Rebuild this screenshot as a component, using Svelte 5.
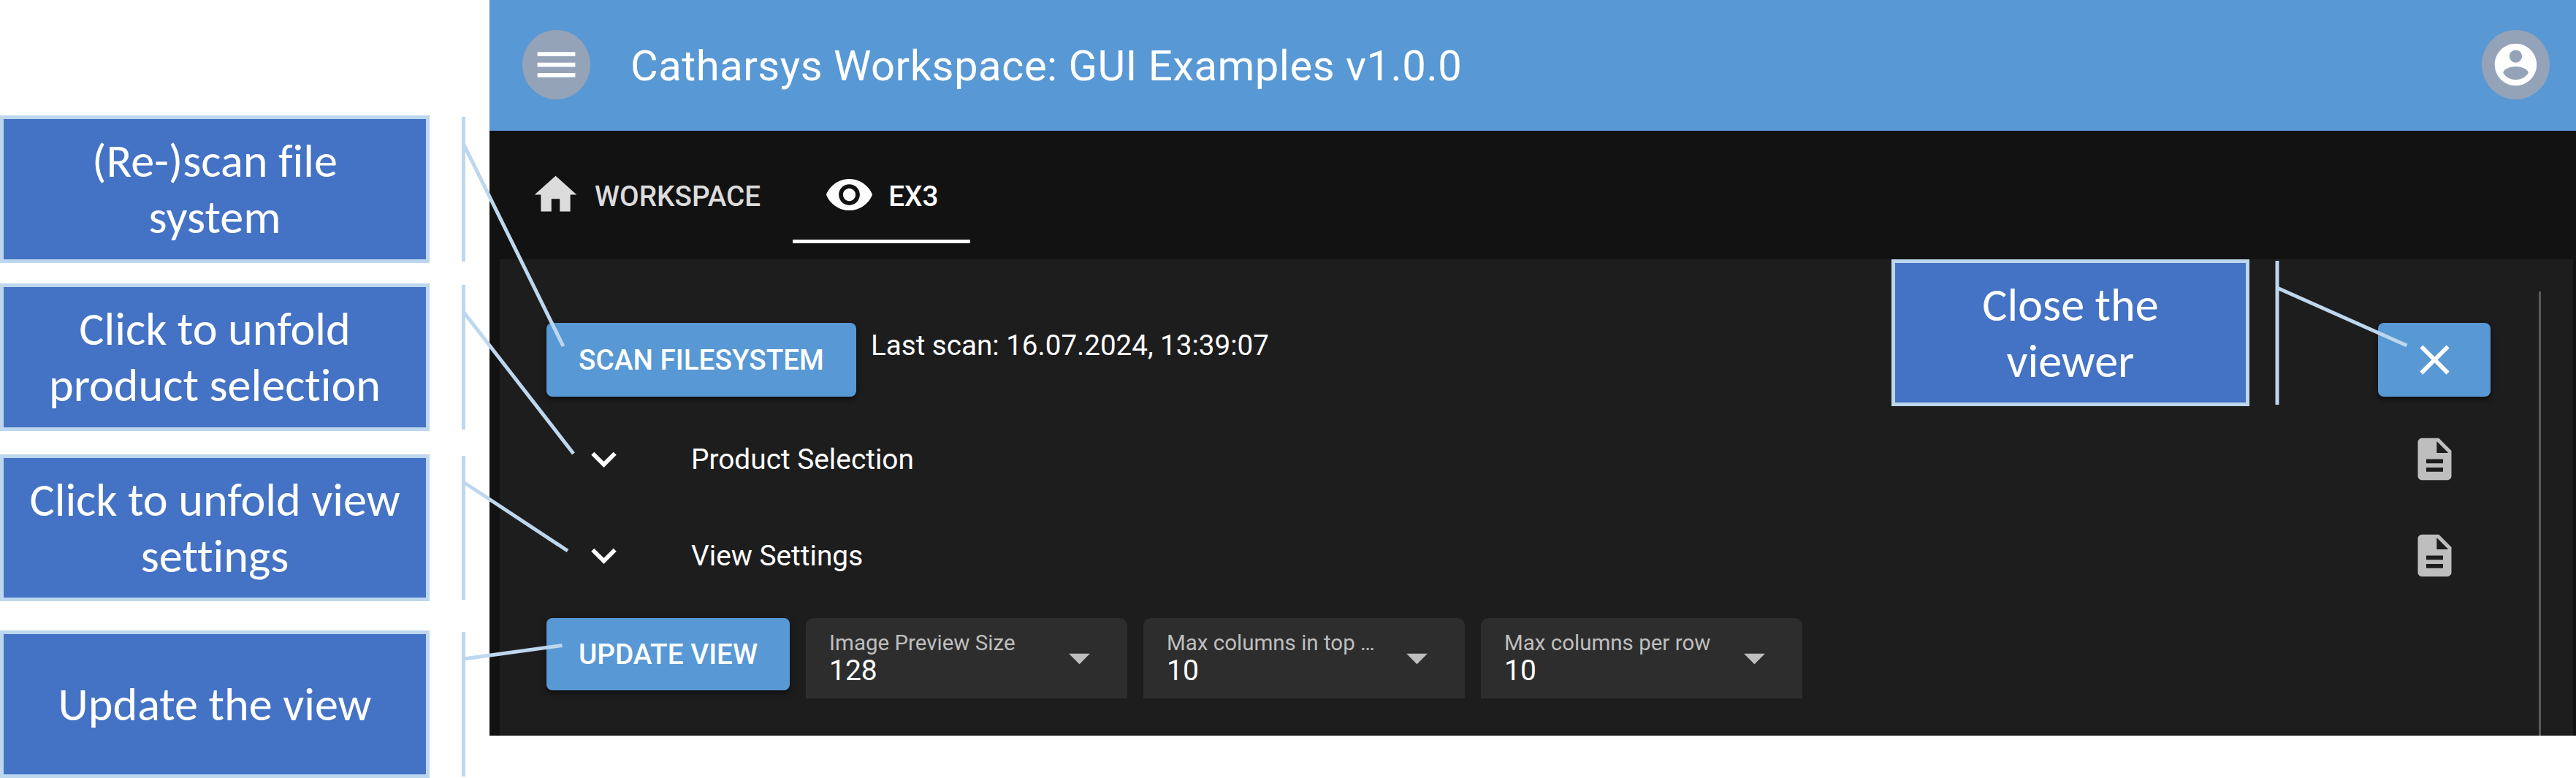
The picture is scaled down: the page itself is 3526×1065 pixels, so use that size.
<script>
  const notes = [
    { lines: ['(Re-)scan file', 'system'], cls: 'n1' },
    { lines: ['Click to unfold', 'product selection'], cls: 'n2' },
    { lines: ['Click to unfold view', 'settings'], cls: 'n3' },
    { lines: ['Update the view'], cls: 'n4' }
  ];

  // Callout leaders: vertical bar (x, y1, y2) and the pointer's two ends.
  const leaders = [
    { x: 634.5, y1: 160, y2: 358, from: [634.5, 197], to: [771, 474] },
    { x: 634.5, y1: 390, y2: 588, from: [634.5, 427], to: [785, 621] },
    { x: 634.5, y1: 624, y2: 821, from: [634.5, 660], to: [777, 754] },
    { x: 634.5, y1: 865, y2: 1063, from: [634.5, 902], to: [769.5, 883.5] },
    { x: 3117, y1: 357, y2: 554, from: [3117, 394], to: [3294.5, 473] }
  ];

  const folds = ['Product Selection', 'View Settings'];

  const selects = [
    { label: 'Image Preview Size', value: '128' },
    { label: 'Max columns in top …', value: '10' },
    { label: 'Max columns per row', value: '10' }
  ];

  const icons = {
    menu: 'M3 18h18v-2H3v2zm0-5h18v-2H3v2zm0-7v2h18V6H3z',
    account:
      'M12 2C6.48 2 2 6.48 2 12s4.48 10 10 10 10-4.480 10-10S17.52 2 12 2zm0 3c1.66 0 3 1.34 3 3s-1.34 3-3 3-3-1.34-3-3 1.34-3 3-3zm0 14.2c-2.5 0-4.71-1.28-6-3.22.03-1.99 4-3.08 6-3.08 1.99 0 5.97 1.09 6 3.08-1.29 1.94-3.5 3.22-6 3.22z',
    home: 'M10 20v-6h4v6h5v-8h3L12 3 2 12h3v8z',
    eye: 'M12 4.5C7 4.5 2.73 7.61 1 12c1.73 4.39 6 7.5 11 7.5s9.27-3.11 11-7.5c-1.73-4.39-6-7.5-11-7.5zM12 17c-2.76 0-5-2.24-5-5s2.24-5 5-5 5 2.24 5 5-2.24 5-5 5zm0-8c-1.66 0-3 1.34-3 3s1.34 3 3 3 3-1.34 3-3-1.34-3-3-3z',
    close: 'M19 6.41L17.59 5 12 10.59 6.41 5 5 6.41 10.59 12 5 17.59 6.41 19 12 13.41 17.59 19 19 17.59 13.41 12z',
    expand: 'M16.59 8.59L12 13.17 7.41 8.59 6 10l6 6 6-6z',
    doc: 'M14 2H6c-1.1 0-1.99.9-1.99 2L4 20c0 1.1.89 2 1.99 2H18c1.1 0 2-.9 2-2V8l-6-6zm2 16H8v-2h8v2zm0-4H8v-2h8v2zm-3-5V3.5L18.5 9H13z',
    drop: 'M7 10l5 5 5-5z'
  };
</script>

{#snippet icon(name)}
  <svg class="icon" viewBox="0 0 24 24" aria-hidden="true"><path d={icons[name]} /></svg>
{/snippet}

<div class="page">
  <aside class="notes">
    {#each notes as note}
      <div class="note {note.cls}">
        {#each note.lines as line}<span>{line}</span>{/each}
      </div>
    {/each}
  </aside>

  <main class="app">
    <header class="bar">
      <button class="round" aria-label="Menu">{@render icon('menu')}</button>
      <h1>Catharsys Workspace: GUI Examples v1.0.0</h1>
      <button class="round" aria-label="Account">{@render icon('account')}</button>
    </header>

    <nav class="tabs">
      <div class="tab">{@render icon('home')}<span>WORKSPACE</span></div>
      <div class="tab active">{@render icon('eye')}<span>EX3</span></div>
    </nav>

    <section class="panel">
      <div class="content">
        <div class="scan">
          <button class="btn scan-btn">SCAN FILESYSTEM</button>
          <span class="last">Last scan: 16.07.2024, 13:39:07</span>
          <button class="btn close" aria-label="Close">{@render icon('close')}</button>
        </div>
        <div class="folds">
          {#each folds as fold}
            <div class="fold">
              {@render icon('expand')}
              <span>{fold}</span>
              <i class="doc">{@render icon('doc')}</i>
            </div>
          {/each}
        </div>
        <div class="controls">
          <button class="btn update">UPDATE VIEW</button>
          {#each selects as select}
            <div class="select">
              <div class="field">
                <span class="label">{select.label}</span>
                <span class="value">{select.value}</span>
              </div>
              {@render icon('drop')}
            </div>
          {/each}
        </div>
      </div>
      <div class="track"></div>
    </section>
  </main>

  <svg class="leaders" viewBox="0 0 3526 1065" aria-hidden="true">
    {#each leaders as l}
      <path d="M{l.x} {l.y1}V{l.y2}M{l.from[0]} {l.from[1]}L{l.to[0]} {l.to[1]}" />
    {/each}
  </svg>
  <div class="note n5"><span>Close the</span><span>viewer</span></div>
</div>

<style>
  :global(body) {
    margin: 0;
    background: #fff;
  }
  .page {
    position: relative;
    display: flex;
    width: 3526px;
    height: 1065px;
    overflow: hidden;
    background: #fff;
    font-family: Roboto, 'Liberation Sans', sans-serif;
    color: #fff;
  }
  .notes {
    width: 670px;
    flex: none;
  }
  .note {
    box-sizing: border-box;
    width: 588px;
    height: 202px;
    border: 5px solid #bdd7ee;
    background: #4472c4;
    display: flex;
    flex-direction: column;
    align-items: center;
    justify-content: center;
    font: 64.2px/77px Carlito, Calibri, Lato, sans-serif;
    font-variant-ligatures: none;
    white-space: nowrap;
  }
  .n1 { margin-top: 158px; }
  .n2 { margin-top: 28px; }
  .n3 { margin-top: 32px; height: 201px; }
  .n4 { margin-top: 40px; }
  .n5 {
    position: absolute;
    left: 2589px;
    top: 355px;
    width: 490px;
    height: 201px;
  }
  .leaders {
    position: absolute;
    left: 0;
    top: 0;
    width: 3526px;
    height: 1065px;
    fill: none;
    stroke: #bdd7ee;
    stroke-width: 5;
  }
  .app {
    width: 2856px;
    height: 1007px;
    background: #121212;
  }
  .icon {
    display: block;
    flex: none;
    width: 69px;
    height: 69px;
    fill: currentColor;
  }
  button {
    padding: 0;
    border: 0;
    color: inherit;
    font-family: inherit;
    display: flex;
    align-items: center;
    justify-content: center;
  }
  .bar {
    box-sizing: border-box;
    height: 179px;
    padding: 0 36px 2px 45px;
    display: flex;
    align-items: center;
    background: #5898d4;
  }
  .round {
    width: 93px;
    height: 95px;
    border-radius: 50%;
    background: #94a3b8;
  }
  h1 {
    flex: 1;
    margin: 3px 0 0 55px;
    font-size: 58px;
    font-weight: 400;
    letter-spacing: 0.48px;
  }
  .tabs {
    box-sizing: border-box;
    height: 176px;
    padding: 21px 0 0 12.5px;
    display: flex;
  }
  .tab {
    box-sizing: border-box;
    height: 133px;
    padding: 0 43.5px;
    display: flex;
    align-items: center;
    gap: 19px;
    font-size: 38.7px;
    font-weight: 500;
    color: #dcdcdc;
  }
  .tab span {
    padding-top: 4px;
  }
  .active {
    color: #fff;
    box-shadow: inset 0 -5px #fff;
  }
  .panel {
    box-sizing: border-box;
    height: 652px;
    margin: 0 4px 0 14px;
    padding-left: 64px;
    display: flex;
    background: #1d1d1d;
  }
  .content {
    width: 2661px;
    padding-top: 87px;
  }
  .track {
    width: 3px;
    margin: 44px 0 0 66px;
    background: #5a5a5a;
  }
  .scan {
    display: flex;
    height: 101px;
  }
  .btn {
    border-radius: 8px;
    background: #5898d4;
    font-size: 38.7px;
    font-weight: 500;
    box-shadow: 0 3px 10px rgba(0, 0, 0, 0.3), 0 4px 4px rgba(0, 0, 0, 0.25);
  }
  .scan-btn {
    width: 424px;
  }
  .last {
    margin-left: 20px;
    font-size: 38.6px;
    line-height: 61px;
  }
  .close {
    width: 154px;
    margin-left: auto;
  }
  .folds {
    padding-top: 19px;
  }
  .fold {
    height: 132px;
    display: flex;
    align-items: center;
    padding-left: 44px;
    font-size: 38.8px;
  }
  .fold span {
    margin-left: 85px;
    padding-top: 1px;
  }
  .doc {
    margin-left: auto;
    margin-right: 42px;
    color: #bebebe;
  }
  .controls {
    display: flex;
    align-items: flex-start;
    padding-top: 20px;
    gap: 22px;
  }
  .update {
    width: 333px;
    height: 99px;
  }
  .select {
    box-sizing: border-box;
    width: 440px;
    height: 110px;
    padding: 0 32px;
    display: flex;
    justify-content: space-between;
    border-radius: 11px 11px 0 0;
    background: #2d2d2d;
    color: #bebebe;
  }
  .field {
    display: flex;
    flex-direction: column;
    padding-top: 14px;
  }
  .select .icon {
    margin: 20px -1px 0 0;
  }
  .label {
    font-size: 29.5px;
    line-height: 40px;
    white-space: nowrap;
  }
  .value {
    font-size: 39px;
    line-height: 36px;
    color: #fff;
  }
</style>
